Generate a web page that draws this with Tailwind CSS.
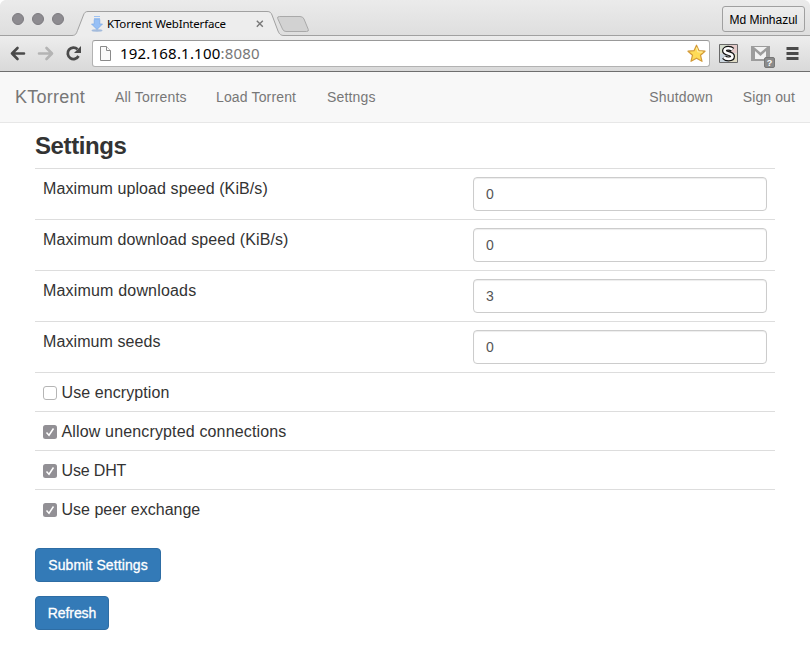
<!DOCTYPE html>
<html lang="en">
<head>
<meta charset="utf-8">
<title>KTorrent WebInterface</title>
<script src="https://cdn.jsdelivr.net/npm/@tailwindcss/browser@4"></script>
</head>
<body class="w-[810px] h-[651px] overflow-hidden bg-white font-['Liberation_Sans',Arial,sans-serif] text-[#333]">
<header class="relative h-9 flex items-start bg-linear-to-b from-[#ebebeb] to-[#dedede]">
  <svg class="absolute inset-0" width="810" height="36" viewBox="0 0 810 36" fill="none">
    <path d="M0 0H5Q1 1 0 5Z M810 0H805Q809 1 810 5Z" fill="#fff"/>
    <path d="M0 36V35.500H72C76 35.500 76.500 33 77.500 30.500L83.500 15C84.500 12.500 85.500 11.500 88 11.500H267C270 11.500 271 12.500 272 15L278 31C279.500 34.500 281 35.500 284 35.500H810V36Z" fill="#ededed"/>
    <path d="M0 35.500H72C76 35.500 76.500 33 77.500 30.500L83.500 15C84.500 12.500 85.500 11.500 88 11.500H267C270 11.500 271 12.500 272 15L278 31C279.500 34.500 281 35.500 284 35.500H810" stroke="#a1a1a1"/>
    <path d="M279.500 16.500H300Q303 16.500 304 19L308.300 29.500Q309 31.500 306.500 31.500H286Q283.500 31.500 282.500 29L277.700 18.500Q277 16.500 279.500 16.500Z" fill="#d2d2d2" stroke="#a9a9a9"/>
    <g fill="#8d8b90" stroke="#7d7b80"><circle cx="18" cy="19" r="5.500"/><circle cx="38" cy="19" r="5.500"/><circle cx="58" cy="19" r="5.500"/></g>
    <ellipse cx="97" cy="30.500" rx="5.500" ry="1.200" fill="#a3bbdc"/>
    <path d="M94.200 19.500V24H91.500L97 29.500L102.500 24H99.800V19.500Z" fill="#97c0f6" stroke="#79a9e6" stroke-width=".7"/>
    <path d="M94 16.500H100M94 18.500H100" stroke="#9dc1f1" stroke-width="1.200"/>
    <path d="M256.800 20.800L262.800 26.800M262.800 20.800L256.800 26.800" stroke="#777" stroke-width="1.400"/>
  </svg>
  <div class="relative ml-[107px] mt-[15px] w-[140px] text-[11.500px] leading-[18px] tracking-[-0.17px] text-black whitespace-nowrap font-['Noto_Sans',sans-serif]">KTorrent WebInterface</div>
  <div class="relative ml-auto mr-[5px] mt-[6px] w-[83px] h-[26px] border border-[#a0a0a0] rounded-[3px] bg-linear-to-b from-[#ededed] to-[#e1e1e1] text-center text-xs leading-[26px] text-black whitespace-nowrap">Md Minhazul</div>
</header>
<div class="h-9 flex items-center bg-linear-to-b from-[#ededed] to-[#d9d9d9] border-b border-[#6f6f6f]">
  <svg class="shrink-0" width="92" height="35" viewBox="0 36 92 35" fill="none">
    <path d="M24 53.500H12M17.500 48L12 53.500L17.500 59" stroke="#4a4a4a" stroke-width="2.600" stroke-linecap="round" stroke-linejoin="round"/>
    <path d="M39 53.500H51M46.500 48L52 53.500L46.500 59" stroke="#b4b4b4" stroke-width="2.600" stroke-linecap="round" stroke-linejoin="round"/>
    <path d="M77.500 49.300A5.700 5.700 0 1 0 78.500 56" stroke="#4a4a4a" stroke-width="2.800"/>
    <path d="M81 46V53H74Z" fill="#4a4a4a"/>
  </svg>
  <div class="w-[618px] h-[27px] shrink-0 rounded-[3px] border border-[#b2b2b2] border-t-[#999] bg-white flex items-center">
    <svg class="ml-[6px]" width="13" height="17" viewBox="0 0 13 17" fill="#fafafa" stroke="#8a8a8a"><path d="M1.500 1.500H7.500L11.500 5.500V15.500H1.500Z"/><path d="M7.500 1.500V5.500H11.500"/></svg>
    <div class="ml-[8px] pb-[2px] text-[15px] leading-6 tracking-[0.2px] whitespace-nowrap text-[#777] font-['Noto_Sans',sans-serif]"><span class="text-black">192.168.1.100</span>:8080</div>
    <svg class="ml-auto mr-[3px]" width="19" height="19" viewBox="0 0 19 19"><path d="M9.500 1.200L12 6.700L18 7.200L13.500 11.200L15 17.300L9.500 14.200L4 17.300L5.500 11.200L1 7.200L7 6.700Z" fill="#ffdc58" stroke="#d39a38" stroke-width="1.200" stroke-linejoin="round"/><path d="M9.500 3.500L11 7.800L15.500 8.200" fill="none" stroke="#fff0a5" stroke-width="1.200"/></svg>
  </div>
  <svg class="shrink-0" width="100" height="35" viewBox="710 36 100 35" fill="none">
    <path d="M719.500 44.500H737.500V62.500H719.500Z" fill="#ddd" stroke="#686868"/>
    <path d="M720 45H728V53H720Z" fill="#d5dccd"/><path d="M729 45H737V53H729Z" fill="#e5cbca"/><path d="M720 54H728V62H720Z" fill="#cbd6df"/><path d="M729 54H737V62H729Z" fill="#e1ddc6"/>
    <path d="M732.500 49.700C731.500 48.700 730 48.200 728.300 48.200C726 48.200 724.500 49.300 724.500 50.800C724.500 54.300 732.500 52.500 732.500 56.200C732.500 57.900 730.900 58.900 728.500 58.900C726.600 58.900 725 58.300 724 57.100" stroke="#111" stroke-width="5"/>
    <path d="M732.500 49.700C731.500 48.700 730 48.200 728.300 48.200C726 48.200 724.500 49.300 724.500 50.800C724.500 54.300 732.500 52.500 732.500 56.200C732.500 57.900 730.900 58.900 728.500 58.900C726.600 58.900 725 58.300 724 57.100" stroke="#fff" stroke-width="2.600"/>
    <path d="M751 46H770V61H751Z" fill="#9c9c9c"/>
    <path d="M755 51L760.500 56L766 51V59H755Z" fill="#f2f2f2"/><path d="M754 47H767L760.500 52.500Z" fill="#f2f2f2"/>
    <rect x="764.500" y="57.500" width="10" height="10" rx="1.500" fill="#8b8b8b" stroke="#777"/>
    <text x="769.500" y="66" text-anchor="middle" font-family="Liberation Sans" font-size="9" font-weight="700" fill="#fff">?</text>
    <path d="M786.500 48.500H798.500M786.500 53.500H798.500M786.500 58.500H798.500" stroke="#4a4a4a" stroke-width="2.800"/>
  </svg>
</div>
<nav class="h-[51px] flex items-center bg-[#f8f8f8] border-b border-[#e7e7e7] px-[15px] text-sm tracking-[0.15px] text-[#777] whitespace-nowrap">
  <a class="w-[100px] text-lg tracking-[0.25px]">KTorrent</a>
  <a class="w-[101px]">All Torrents</a>
  <a class="w-[111px]">Load Torrent</a>
  <a>Settngs</a>
  <a class="ml-auto mr-[30px]">Shutdown</a>
  <a class="tracking-[0.1px]">Sign out</a>
</nav>
<main class="px-[35px]">
  <h1 class="h-[45px] pt-[8px] text-2xl leading-[30px] font-bold tracking-[-0.4px]">Settings</h1>
  <form class="text-base tracking-[0.09px]">
    <div class="h-[51px] border-t border-[#ddd] px-2 pt-2 flex justify-between"><label class="leading-[23px] whitespace-nowrap">Maximum upload speed (KiB/s)</label><input class="w-[294px] h-[34px] rounded border border-[#ccc] px-3 text-sm text-[#555] shadow-[inset_0_1px_1px_rgba(0,0,0,0.075)]" value="0"></div>
    <div class="h-[51px] border-t border-[#ddd] px-2 pt-2 flex justify-between"><label class="leading-[23px] whitespace-nowrap">Maximum download speed (KiB/s)</label><input class="w-[294px] h-[34px] rounded border border-[#ccc] px-3 text-sm text-[#555] shadow-[inset_0_1px_1px_rgba(0,0,0,0.075)]" value="0"></div>
    <div class="h-[51px] border-t border-[#ddd] px-2 pt-2 flex justify-between"><label class="leading-[23px] tracking-[0.18px] whitespace-nowrap">Maximum downloads</label><input class="w-[294px] h-[34px] rounded border border-[#ccc] px-3 text-sm text-[#555] shadow-[inset_0_1px_1px_rgba(0,0,0,0.075)]" value="3"></div>
    <div class="h-[51px] border-t border-[#ddd] px-2 pt-2 flex justify-between"><label class="leading-[23px] whitespace-nowrap">Maximum seeds</label><input class="w-[294px] h-[34px] rounded border border-[#ccc] px-3 text-sm text-[#555] shadow-[inset_0_1px_1px_rgba(0,0,0,0.075)]" value="0"></div>
    <label class="h-[39px] border-t border-[#ddd] px-2 pt-[2px] flex items-center"><svg class="mr-[4.500px]" width="14" height="14" viewBox="0 0 14 14"><rect x=".5" y=".5" width="13" height="13" rx="2.500" fill="#fff" stroke="#b5b5b5"/></svg>Use encryption</label>
    <label class="h-[39px] border-t border-[#ddd] px-2 pt-[2px] flex items-center tracking-[0.15px]"><svg class="mr-[4.500px]" width="14" height="14" viewBox="0 0 14 14"><rect width="14" height="14" rx="2.500" fill="#929095"/><path d="M3.500 7.500L6 10.200L10.500 3.500" fill="none" stroke="#fff" stroke-width="1.500"/></svg>Allow unencrypted connections</label>
    <label class="h-[39px] border-t border-[#ddd] px-2 pt-[2px] flex items-center tracking-[-0.15px]"><svg class="mr-[4.500px]" width="14" height="14" viewBox="0 0 14 14"><rect width="14" height="14" rx="2.500" fill="#929095"/><path d="M3.500 7.500L6 10.200L10.500 3.500" fill="none" stroke="#fff" stroke-width="1.500"/></svg>Use DHT</label>
    <label class="h-[39px] border-t border-[#ddd] px-2 pt-[2px] flex items-center tracking-normal"><svg class="mr-[4.500px]" width="14" height="14" viewBox="0 0 14 14"><rect width="14" height="14" rx="2.500" fill="#929095"/><path d="M3.500 7.500L6 10.200L10.500 3.500" fill="none" stroke="#fff" stroke-width="1.500"/></svg>Use peer exchange</label>
    <div class="mt-5 flex flex-col items-start gap-[14px]">
      <button type="button" class="w-[126px] h-[34px] rounded border border-[#2e6da4] bg-[#337ab7] text-sm tracking-[0.1px] text-white [-webkit-text-stroke:0.3px_white] whitespace-nowrap">Submit Settings</button>
      <button type="button" class="w-[74px] h-[34px] rounded border border-[#2e6da4] bg-[#337ab7] text-sm tracking-[-0.1px] text-white [-webkit-text-stroke:0.3px_white] whitespace-nowrap">Refresh</button>
    </div>
  </form>
</main>
</body>
</html>
